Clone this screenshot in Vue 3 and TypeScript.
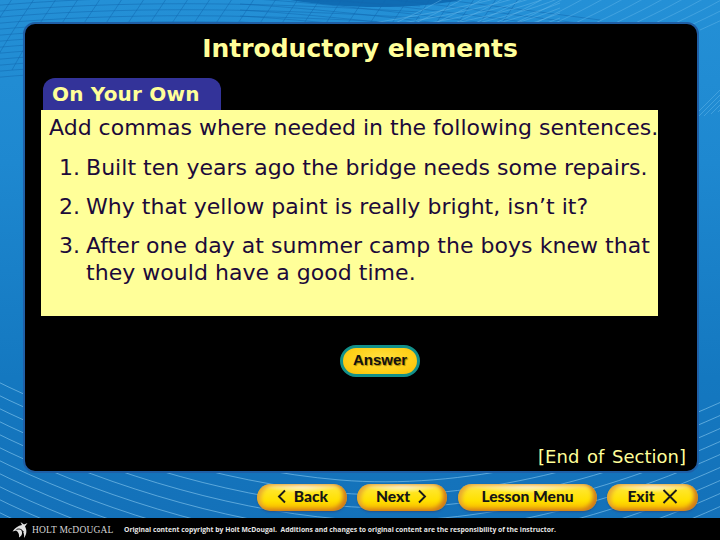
<script setup lang="ts">
const items = [
  { n: '1.', lines: ['Built ten years ago the bridge needs some repairs.'] },
  { n: '2.', lines: ['Why that yellow paint is really bright, isn’t it?'] },
  { n: '3.', lines: ['After one day at summer camp the boys knew that', 'they would have a good time.'] },
]
const navs = [
  { label: 'Back', cls: 'back', icon: 'left' },
  { label: 'Next', cls: 'next', icon: 'right' },
  { label: 'Lesson Menu', cls: 'menu', icon: '' },
  { label: 'Exit', cls: 'exit', icon: 'x' },
]
const bottomCurves = Array.from({ length: 15 }, (_, i) => {
  const y = 378 + i * 13
  return `M-10 ${y} C 90 ${y + 50}, 220 ${y + 92}, 340 ${y + 102} S 600 ${y + 80}, 730 ${y + 20}`
})
const rightDiagonals = Array.from({ length: 22 }, (_, i) => {
  const x = 380 + i * 20
  return `M${x} 30 C ${x + 22} 20, ${x + 44} 10, ${x + 70} -5`
})
const rightUpper = Array.from({ length: 8 }, (_, i) => {
  const x = 690 + i * 7
  return `M${x} ${120 - i * 2} L ${x + 60} ${60 - i * 2}`
})
const latticeA = Array.from({ length: 14 }, (_, i) => {
  const y = -6 + i * 6
  return `M-10 ${y + 6} C 120 ${y - 6}, 260 ${y - 4}, 420 ${y + 6}`
})
const latticeB = Array.from({ length: 26 }, (_, i) => {
  const x = -30 + i * 22
  return `M${x} -4 C ${x - 10} 12, ${x - 24} 30, ${x - 46} 70`
})
const latticeC = Array.from({ length: 12 }, (_, i) => {
  const y = i * 5
  return `M330 ${y + 30} C 430 ${y + 14}, 500 ${y + 2}, 560 ${y - 22}`
})
const latticeD = Array.from({ length: 12 }, (_, i) => {
  const y = i * 6 - 20
  return `M240 ${y} C 340 ${y + 6}, 450 ${y + 20}, 600 ${y + 40}`
})
</script>

<template>
  <div class="stage">
    <svg class="bg" width="720" height="540" viewBox="0 0 720 540" aria-hidden="true">
      <path class="band" d="M280 -2 C 340 10, 420 10, 470 -2Z" />
      <path v-for="(d, i) in latticeA" :key="'a' + i" :d="d" class="dk" />
      <path v-for="(d, i) in latticeB" :key="'b' + i" :d="d" class="dk" />
      <path v-for="(d, i) in latticeD" :key="'d' + i" :d="d" class="dk" />
      <path v-for="(d, i) in latticeC" :key="'c' + i" :d="d" class="ln" />
      <path v-for="(d, i) in rightDiagonals" :key="'r' + i" :d="d" class="ln" />
      <path v-for="(d, i) in rightUpper" :key="'u' + i" :d="d" class="ln" />
      <path v-for="(d, i) in bottomCurves" :key="'e' + i" :d="d" class="ln bright" />
    </svg>

    <main class="panel">
      <h1 class="title">Introductory elements</h1>
      <div class="tab">On Your Own</div>
      <section class="card">
        <p class="lead">Add commas where needed in the following sentences.</p>
        <ol class="list">
          <li v-for="item in items" :key="item.n" class="item">
            <span class="num">{{ item.n }}</span>
            <span class="txt"><span v-for="l in item.lines" :key="l" class="line">{{ l }}</span></span>
          </li>
        </ol>
      </section>
      <div class="answer-row">
        <button class="answer" type="button">Answer</button>
      </div>
      <div class="end">[End of Section]</div>
    </main>

    <nav class="nav">
      <div v-for="b in navs" :key="b.label" class="btn" :class="b.cls">
        <svg v-if="b.icon === 'left'" class="ic" width="11" height="15" viewBox="0 0 11 15"><path d="M9 1.5 3 7.5 9 13.5" /></svg>
        <span>{{ b.label }}</span>
        <svg v-if="b.icon === 'right'" class="ic" width="11" height="15" viewBox="0 0 11 15"><path d="M2 1.5 8 7.5 2 13.5" /></svg>
        <svg v-if="b.icon === 'x'" class="ic" width="16" height="15" viewBox="0 0 16 15"><path d="M1.5 1 14.5 14M14.5 1 1.5 14" /></svg>
      </div>
    </nav>

    <footer class="foot">
      <svg class="logo" width="16" height="18" viewBox="0 0 16 18">
        <path d="M0.5 10.5 C 3 7, 6 4.5, 10 4 L 8.5 1 L 12 3.5 L 15.5 2 L 13 5.5 C 15 9, 15 13, 12 17 C 12.5 13, 11.5 10.5, 9 8.5 C 11 12, 10 15, 7 16.5 C 7.5 13.5, 6.5 11, 4 9.5 Z" fill="#e2e2e2" />
        <path d="M4.5 8.5 C 7 7.5, 9.5 8, 11.5 11" fill="none" stroke="#000" stroke-width="0.9" />
      </svg>
      <span class="brand">HOLT McDOUGAL</span>
      <span class="legal">Original content copyright by Holt McDougal.&nbsp; Additions and changes to original content are the responsibility of the instructor.</span>
    </footer>
  </div>
</template>

<style scoped>
.stage {
  position: relative;
  width: 720px;
  height: 540px;
  overflow: hidden;
  display: flex;
  flex-direction: column;
  background: linear-gradient(180deg, #2490d6 0%, #1e88d0 30%, #1478c0 70%, #1470b8 100%);
  font-family: "DejaVu Sans", Verdana, sans-serif;
}
.bg { position: absolute; left: 0; top: 0; }
.band { fill: #0f6cb4; }
.dk { fill: none; stroke: #1168b0; stroke-width: 0.8; opacity: 0.65; }
.ln { fill: none; stroke: #66b8ea; stroke-width: 0.8; opacity: 0.6; }
.ln.bright { stroke: #8ccbf0; opacity: 0.75; }
.panel {
  position: relative;
  box-sizing: border-box;
  margin: 22px 21px 0 23px;
  height: 451px;
  padding: 11px 0 0 16px;
  background: #000;
  border: 2px solid #1f5fa6;
  border-radius: 12px;
  display: flex;
  flex-direction: column;
}
.title {
  margin: 0 0 15px 0;
  padding-right: 18px;
  text-align: center;
  font-size: 25px;
  line-height: 28px;
  font-weight: 700;
  color: #ffff99;
}
.tab {
  box-sizing: border-box;
  width: 178px;
  height: 32px;
  margin-left: 2px;
  padding: 4px 0 0 9px;
  background: #333399;
  border-radius: 12px 12px 0 0;
  color: #ffff99;
  font-weight: 700;
  font-size: 20px;
  line-height: 24px;
  letter-spacing: 0.2px;
}
.card {
  box-sizing: border-box;
  width: 617px;
  height: 206px;
  padding: 4px 0 0 8px;
  background: #ffff99;
  color: #1c0a3a;
  font-size: 22px;
  line-height: 27px;
  white-space: nowrap;
}
.lead { margin: 0 0 13px; }
.list { margin: 0; padding: 0 0 0 10px; list-style: none; letter-spacing: 0.04px; }
.item { display: flex; margin-bottom: 12px; }
.num { width: 27px; flex: none; }
.line { display: block; }
.answer-row { display: flex; padding: 29px 0 0 299px; }
.answer {
  box-sizing: border-box;
  width: 80px;
  height: 32px;
  padding: 0 0 3px;
  border: 3px solid #12908a;
  border-radius: 16px;
  background: radial-gradient(ellipse at 50% 40%, #ffe040 0%, #ffd018 60%, #f8bc08 100%);
  color: #111;
  font-family: "Liberation Sans", Arial, sans-serif;
  font-weight: 700;
  font-size: 15px;
  text-shadow: 1px 1px 1px #a88400;
}
.end {
  margin-top: auto;
  margin-bottom: 2px;
  padding-right: 11px;
  text-align: right;
  color: #ffff99;
  font-size: 18px;
  line-height: 24px;
  word-spacing: 2px;
}
.nav {
  position: relative;
  display: flex;
  gap: 10px;
  margin: 11px 0 0 257px;
}
.btn {
  box-sizing: border-box;
  height: 27px;
  padding-bottom: 3px;
  border-radius: 14px;
  display: flex;
  align-items: center;
  justify-content: center;
  gap: 7px;
  background:
    radial-gradient(ellipse 40% 28% at 50% 6%, #fffbe6 0%, rgba(255, 248, 200, 0) 100%),
    linear-gradient(180deg, #ffe68a 0%, #ffe627 24%, #ffe000 62%, #f7b400 100%);
  box-shadow: inset -4px -2px 4px #d07a1c, inset 4px 1px 4px #e8a830, 0 1px 2px #24518f;
  color: #161616;
  font-family: Lato, "Open Sans", sans-serif;
  font-weight: 900;
  font-size: 15.6px;
}
.back { width: 90px; }
.next { width: 90px; }
.menu { width: 139px; margin-left: 1px; }
.exit { width: 91px; }
.ic { fill: none; stroke: #1a1a1a; stroke-width: 1.9; }
.foot {
  position: relative;
  margin-top: 7px;
  flex: 1;
  background: #000;
  display: flex;
  align-items: center;
  padding: 1px 0 0 12px;
  color: #e6e6e6;
}
.logo { margin-right: 4px; flex: none; }
.brand {
  font-family: "Liberation Serif", serif;
  font-size: 9.5px;
  letter-spacing: 0.15px;
  color: #d4d4d4;
  width: 92px;
  flex: none;
  white-space: nowrap;
}
.legal {
  font-family: "Open Sans", "Liberation Sans", sans-serif;
  font-weight: 700;
  font-size: 6.8px;
  white-space: nowrap;
}
</style>
